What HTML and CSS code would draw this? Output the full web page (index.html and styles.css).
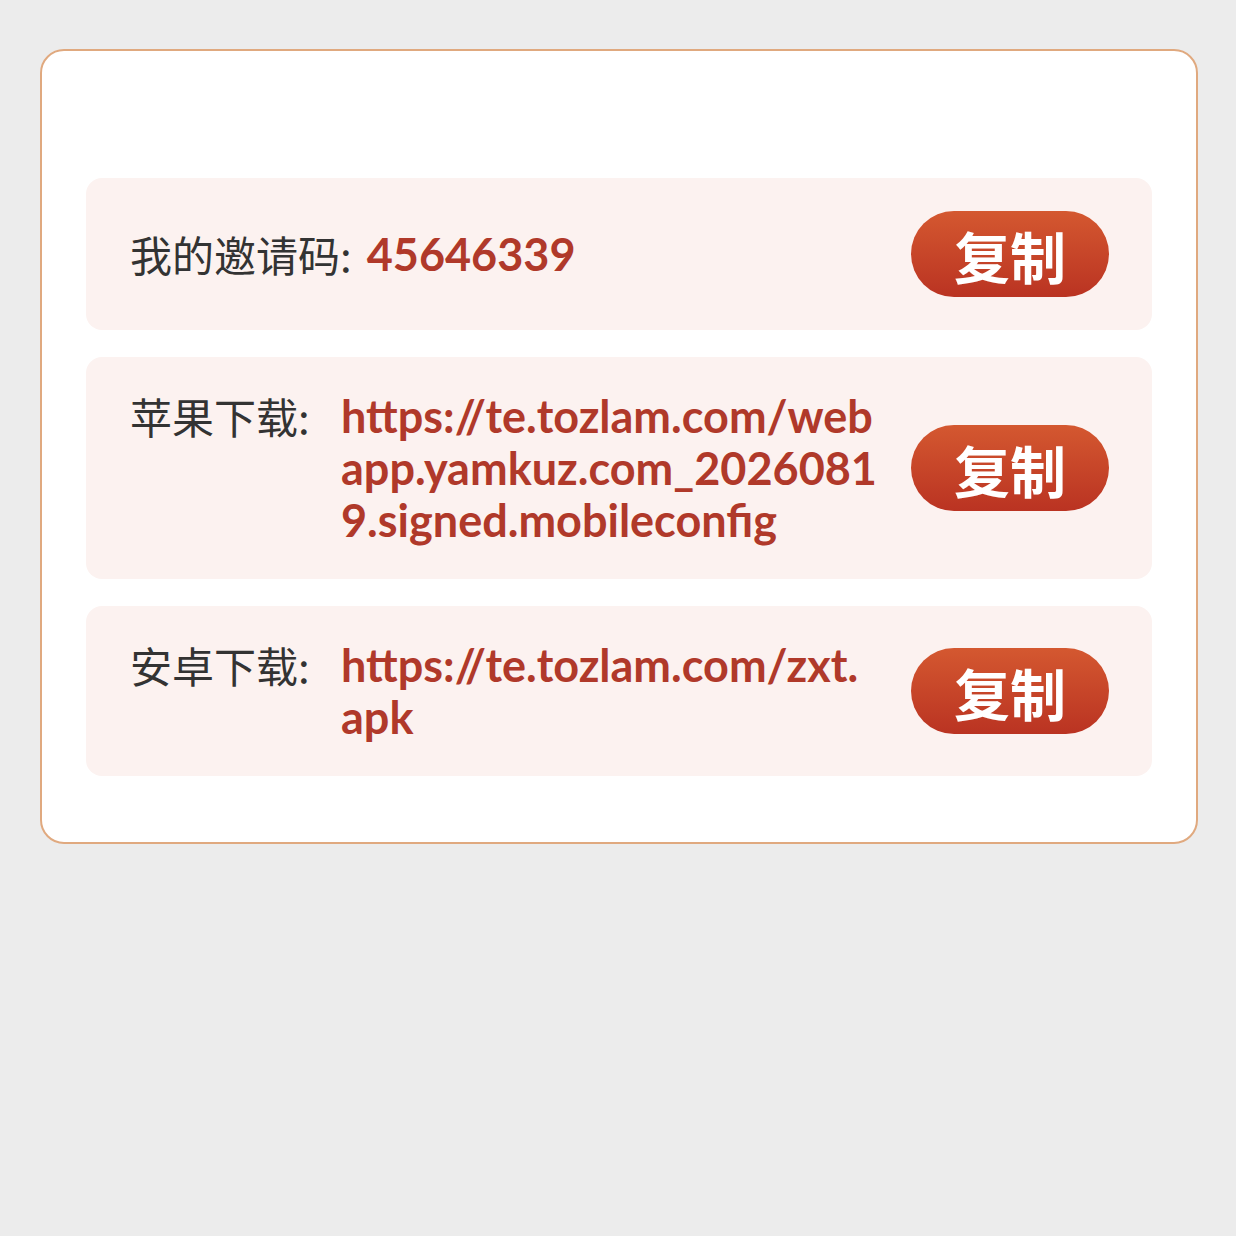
FILE: index.html
```html
<!DOCTYPE html>
<html lang="zh-CN">
<head>
    <meta charset="UTF-8">
    <meta name="viewport" content="width=device-width, initial-scale=1.0">
    <title>邀请下载</title>
    <link rel="stylesheet" href="styles.css">
</head>
<body>
    <div class="invite-card">
        <div class="info-row">
            <div class="info-text">
                <span class="info-label">我的邀请码:</span>
                <span class="info-value code">45646339</span>
            </div>
            <button class="copy-btn">复制</button>
        </div>

        <div class="info-row">
            <div class="info-text">
                <span class="info-label">苹果下载:</span>
                <span class="info-value">https://te.tozlam.com/webapp.yamkuz.com_20260819.signed.mobileconfig</span>
            </div>
            <button class="copy-btn">复制</button>
        </div>

        <div class="info-row">
            <div class="info-text">
                <span class="info-label">安卓下载:</span>
                <span class="info-value">https://te.tozlam.com/zxt.apk</span>
            </div>
            <button class="copy-btn">复制</button>
        </div>
    </div>
</body>
</html>
```

FILE: styles.css
```css
body {
    margin: 0;
    padding: 49px 38px 0 40px;
    background: #ececec;
    font-family: "Lato", "Noto Sans CJK SC", sans-serif;
    min-height: 100vh;
    box-sizing: border-box;
}

.invite-card {
    background: #fff;
    border: 2px solid #e0a97f;
    border-radius: 24px;
    padding: 127px 44px 66px 44px;
    display: flex;
    flex-direction: column;
    gap: 27px;
}

.info-row {
    background: #fcf2f0;
    border-radius: 16px;
    padding: 33px 43px 33px 44px;
    display: flex;
    align-items: center;
}

.info-text {
    flex: 1;
    display: flex;
    align-items: flex-start;
    margin-right: 32px;
    min-width: 0;
}

.info-label {
    flex-shrink: 0;
    min-width: 196px;
    margin-right: 15px;
    font-family: "Noto Sans CJK SC", sans-serif;
    font-size: 42px;
    line-height: 52px;
    color: #333;
}

.info-value {
    flex: 1;
    min-width: 0;
    font-size: 45px;
    line-height: 52px;
    font-weight: bold;
    color: #b0392a;
    word-break: break-all;
}

.info-value.code {
    flex: 0 1 auto;
}

.copy-btn {
    flex-shrink: 0;
    width: 198px;
    height: 86px;
    border: none;
    border-radius: 43px;
    background: linear-gradient(180deg, #d45830 0%, #ba3322 100%);
    color: #fff;
    font-family: "Noto Sans CJK SC", sans-serif;
    font-size: 56px;
    font-weight: bold;
    padding: 0;
    cursor: pointer;
}
```
